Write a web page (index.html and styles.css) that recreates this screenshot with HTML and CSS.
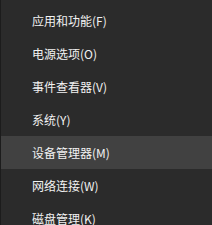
FILE: index.html
```html
<!DOCTYPE html>
<html lang="zh-CN">
<head>
<meta charset="utf-8">
<link rel="stylesheet" href="styles.css">
</head>
<body>
<ul class="menu">
  <li class="item">应用和功能(F)</li>
  <li class="item">电源选项(O)</li>
  <li class="item">事件查看器(V)</li>
  <li class="item">系统(Y)</li>
  <li class="item active">设备管理器(M)</li>
  <li class="item">网络连接(W)</li>
  <li class="item">磁盘管理(K)</li>
</ul>
</body>
</html>
```
FILE: styles.css
```css
html, body {
  margin: 0;
  padding: 0;
  background: #2b2b2b;
  width: 212px;
  height: 225px;
  overflow: hidden;
}
.menu {
  list-style: none;
  margin: 0;
  padding: 4px 0 0 0;
  border-left: 1px solid #1c1c1c;
  height: 225px;
  box-sizing: border-box;
  font-family: "Noto Sans CJK SC", "Noto Sans", sans-serif;
  font-size: 12px;
  color: #f2f2f2;
}
.item {
  height: 33px;
  line-height: 33px;
  padding-left: 31px;
  white-space: nowrap;
}
.item.active {
  background: #414141;
}
```
